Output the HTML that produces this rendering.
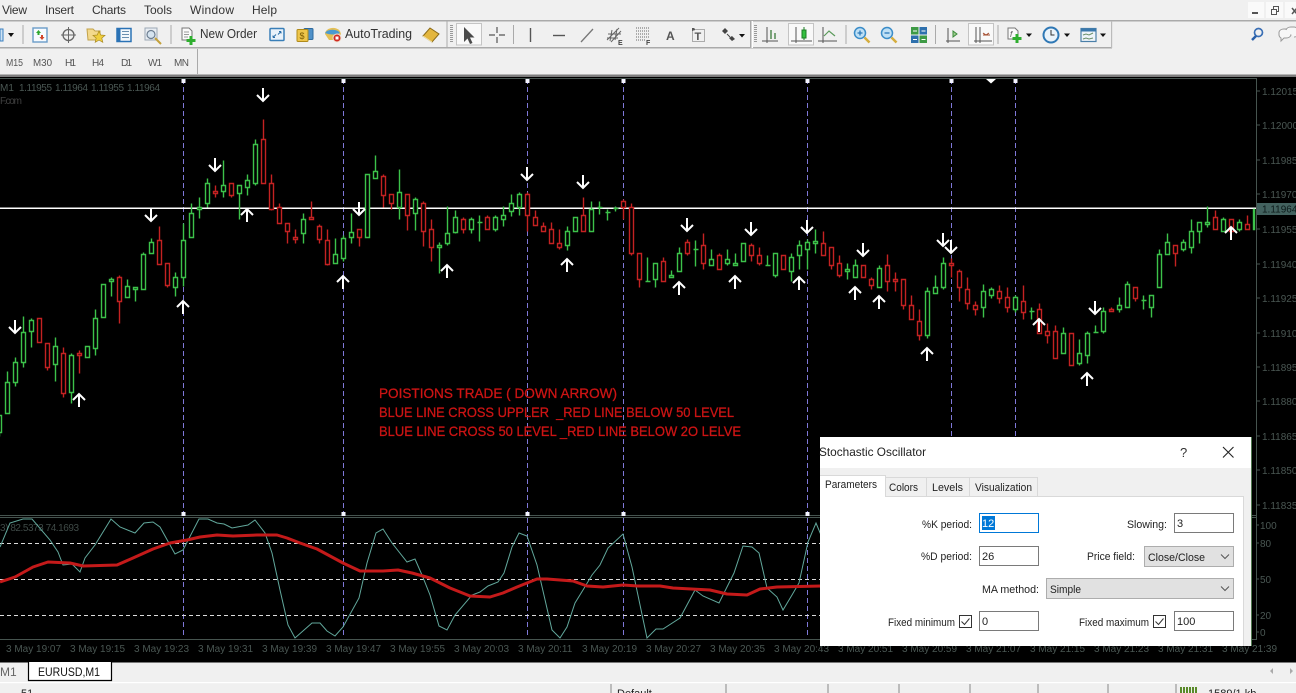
<!DOCTYPE html>
<html><head><meta charset="utf-8"><title>Chart</title>
<style>
html,body{margin:0;padding:0;width:1296px;height:693px;overflow:hidden;background:#f0f0f0}
svg{display:block;font-family:"Liberation Sans",sans-serif}
.m{font-size:12px;fill:#333}
.tf{font-size:10px;fill:#555}
.p{font-size:10px;fill:#4a5753}
.d{font-size:11.3px;fill:#222}
</style></head><body>
<svg width="1296" height="693" viewBox="0 0 1296 693" xmlns="http://www.w3.org/2000/svg">
<rect width="1296" height="693" fill="#f0f0f0"/>
<!-- menu -->
<text class="m" x="2" y="14" textLength="25">View</text>
<text class="m" x="45" y="14" textLength="29">Insert</text>
<text class="m" x="92" y="14" textLength="34">Charts</text>
<text class="m" x="144" y="14" textLength="28">Tools</text>
<text class="m" x="190" y="14" textLength="44">Window</text>
<text class="m" x="252" y="14" textLength="25">Help</text>
<!-- win controls -->
<rect x="1248" y="2" width="16" height="16" fill="#fafafa"/><rect x="1266" y="2" width="17" height="16" fill="#fafafa"/><rect x="1285" y="2" width="11" height="16" fill="#fafafa"/>
<path d="M1252 13h6" stroke="#555" stroke-width="2"/>
<path d="M1271.5 9.5h5v5h-5zM1273.5 9V6.500h5v5h-2" fill="none" stroke="#555"/>
<path d="M1292 8l5 6M1297 8l-5 6" stroke="#555" stroke-width="1.500"/>
<!-- toolbar lines -->
<rect x="0" y="20" width="1296" height="1.500" fill="#aaa"/>
<rect x="0" y="47" width="1112" height="1.500" fill="#aaa"/>
<rect x="1111" y="21" width="1.200" height="27" fill="#bbb"/>
<rect x="750" y="21" width="1.500" height="27" fill="#aaa"/><rect x="751.500" y="21" width="1.500" height="27" fill="#fff"/>
<g fill="#aaa"><rect x="22.500" y="25" width="1" height="19"/><rect x="170.500" y="25" width="1" height="19"/><rect x="446.500" y="21" width="1" height="26"/><rect x="513" y="25" width="1" height="19"/><rect x="845.500" y="25" width="1" height="19"/><rect x="935" y="25" width="1" height="19"/><rect x="997.500" y="25" width="1" height="19"/></g>
<path d="M451.500 25v18M755.500 25v18" stroke="#999" stroke-width="3" stroke-dasharray="1 1"/>
<!-- selected buttons -->
<g fill="#f9f9f9" stroke="#c4c4c4"><rect x="456.500" y="23.500" width="25" height="21.500"/><rect x="788.500" y="23.500" width="25" height="21.500"/><rect x="968.500" y="23.500" width="25" height="21.500"/></g>
<!-- left icons -->
<path d="M0 29h3v12H0z" fill="#cfe3f4" stroke="#3a7fc0"/><path d="M8 33h6l-3 4z" fill="#111"/>
<rect x="33" y="28" width="14" height="14" fill="#f7fbff" stroke="#6a9cc8" stroke-width="1.400"/><path d="M36 33l2.500-3 2.500 3h-1.500v2h-2v-2z" fill="#2fa82f"/><path d="M39.500 37l2.500 3 2.500-3H43v-2h-2v2z" fill="#d2452a"/>
<circle cx="68.500" cy="35" r="5.500" fill="none" stroke="#666" stroke-width="1.300"/><path d="M68.500 27v16M61 35h15" stroke="#666"/>
<path d="M87 29h6l2 2h5v9H88z" fill="#f3d98c" stroke="#c2a24a"/><path d="M99 31l1.800 4 4.200.4-3.200 2.700 1 4.200-3.800-2.200-3.800 2.200 1-4.200-3.200-2.700 4.200-.4z" fill="#f0cf3e" stroke="#a98a20" stroke-width=".7"/>
<rect x="117" y="28.500" width="14" height="13" fill="#f4f8fc" stroke="#2a72b5" stroke-width="1.500"/><rect x="117" y="28.500" width="3.500" height="13" fill="#2a72b5"/><path d="M122 31.500h7M122 34.500h7M122 37.500h7" stroke="#6a8fb0"/>
<rect x="145" y="28" width="12" height="12" fill="#e8edf2" stroke="#9ba8b5"/><circle cx="151" cy="34.500" r="4" fill="#d6e4f0" stroke="#6e7f92" stroke-width="1.200"/><path d="M155 38l6 6" stroke="#c4a13c" stroke-width="2"/>
<!-- New order -->
<path d="M182 28h7l3 3v9h-10z" fill="#fafafa" stroke="#777"/><path d="M184 32h5M184 34.500h5M184 37h4" stroke="#999"/><path d="M191 36v9M186.500 40.500h9" stroke="#2fae2f" stroke-width="3"/>
<text x="200" y="38" font-size="12.500" fill="#333" textLength="57" lengthAdjust="spacingAndGlyphs">New Order</text>
<rect x="270" y="28.500" width="14" height="12" rx="1" fill="#e9f2fa" stroke="#3a7fb8" stroke-width="1.500"/><path d="M273 37.500l3-3M281 31.500l-3 3M273 37.500v-2M273 37.500h2M281 31.500v2M281 31.500h-2" stroke="#2a6ea8"/>
<rect x="304" y="28.500" width="9" height="11" rx="1" fill="#4f90c8" stroke="#2e6a9e"/><rect x="297" y="29.500" width="11" height="12" rx="1" fill="#eec54a" stroke="#b08a1a"/><text x="299.500" y="39" font-size="9" fill="#7a5a00">$</text>
<path d="M325 34a8 6 0 0 1 15-3l1 3-4 6h-8z" fill="#e4bf55"/><path d="M325 33a8 5 0 0 1 15 0c-4 2-10 2-15 0z" fill="#4a9ad0"/><circle cx="337" cy="38" r="4" fill="#d02a20" stroke="#f0e0d0"/><rect x="335.500" y="36.500" width="3" height="3" fill="#fff"/>
<text x="345" y="38" font-size="12.500" fill="#333" textLength="67" lengthAdjust="spacingAndGlyphs">AutoTrading</text>
<path d="M423 36l7-8 9 6-7 8z" fill="#e3b63e" stroke="#8a6a18"/><path d="M423 36l9 6" stroke="#f8e6a8"/>
<!-- drawing tools -->
<path d="M464 27v15l3.500-3.500 2.500 5.500 2.500-1-2.500-5.500 4.500 0z" fill="#4a4a4a"/>
<path d="M497 27v6M497 37v6M489 35h6M499 35h6" stroke="#555" stroke-width="1.200"/>
<path d="M530.500 28v14" stroke="#555" stroke-width="1.400"/>
<path d="M553 35.500h12" stroke="#555" stroke-width="1.400"/>
<path d="M581 42l12-13" stroke="#777" stroke-width="1.300"/>
<path d="M607 40l12-12M611 42l10-11M608 34h13M607 38h11M612 30l-2 11M617 29l-2 11" stroke="#666" fill="none"/><text x="618" y="45" font-size="7" font-weight="bold" fill="#444">E</text>
<path d="M636 28h13M636 31h13M636 34h13M636 37h13M636 40h9" stroke="#666" stroke-dasharray="1 1"/><text x="646" y="45" font-size="7" font-weight="bold" fill="#444">F</text>
<text x="666" y="40" font-size="12" font-weight="bold" fill="#555">A</text>
<rect x="692.500" y="29.500" width="12" height="12" fill="none" stroke="#666" stroke-dasharray="1 1"/><text x="694.500" y="40" font-size="11" font-weight="bold" fill="#555">T</text><rect x="692" y="28" width="2.500" height="2.500" fill="#555"/>
<path d="M722 31l3-3 3 3-3 3zM729 38l3-2 3 3-3 2z" fill="#444"/><path d="M727 34l3 3" stroke="#444"/><path d="M739 34h6l-3 3.500z" fill="#111"/>
<!-- chart type -->
<path d="M767 27v16M762 41h16" stroke="#555"/><path d="M771 30v9M775 33v6" stroke="#3a7a3a" stroke-width="1.300"/>
<path d="M796 27v16M791 41h21" stroke="#555"/><rect x="802" y="30" width="4" height="8" fill="#34c040" stroke="#1d7d25"/><path d="M804 27v3M804 38v2" stroke="#1d7d25"/>
<path d="M823 27v16M818 41h19" stroke="#555"/><path d="M824 36l5-5 6 5" fill="none" stroke="#5a9a5a" stroke-width="1.200"/>
<!-- zoom -->
<circle cx="860" cy="33" r="5.500" fill="#bfe0f5" stroke="#3a8cc8" stroke-width="1.500"/><path d="M857.500 33h5M860 30.500v5" stroke="#2a78b8" stroke-width="1.300"/><path d="M864.500 37.500l5 5" stroke="#d5ad3d" stroke-width="2.500"/>
<circle cx="887" cy="33" r="5.500" fill="#bfe0f5" stroke="#3a8cc8" stroke-width="1.500"/><path d="M884.500 33h5" stroke="#2a78b8" stroke-width="1.300"/><path d="M891.500 37.500l5 5" stroke="#d5ad3d" stroke-width="2.500"/>
<rect x="911" y="27" width="7.500" height="7.500" fill="#3e9a45"/><rect x="919.500" y="27" width="7.500" height="7.500" fill="#2e70ad"/><rect x="911" y="35.500" width="7.500" height="7.500" fill="#2e70ad"/><rect x="919.500" y="35.500" width="7.500" height="7.500" fill="#3e9a45"/><path d="M913 31h4M921.500 31h4M913 39.500h4M921.500 39.500h4" stroke="#fff"/>
<path d="M948 28v15M946 41h14" stroke="#555"/><path d="M953 31l4 3-4 3z" fill="#9fcf8f" stroke="#3a8a3a"/>
<path d="M976 27v16M980 27v16M974 41h18" stroke="#555"/><path d="M983 33l3 2 3-2M983 35h7" stroke="#a34a2a" fill="none"/>
<!-- indicators -->
<path d="M1008 28h7l3 3v8h-10z" fill="#fafafa" stroke="#777"/><text x="1010" y="37" font-size="8" font-style="italic" fill="#555">f</text><path d="M1017 34v9M1012.500 38.500h9" stroke="#2fae2f" stroke-width="3"/><path d="M1026 33.500h6l-3 3.500z" fill="#111"/>
<circle cx="1051" cy="35" r="7.500" fill="#eaf3fa" stroke="#2f78b5" stroke-width="2"/><path d="M1051 30v5h3.500" stroke="#333" fill="none"/><path d="M1064 33.500h6l-3 3.500z" fill="#111"/>
<rect x="1081" y="28.500" width="15" height="13" fill="#eef4f9" stroke="#4a7fa8" stroke-width="1.200"/><rect x="1081" y="28.500" width="15" height="3" fill="#3a78ac"/><path d="M1083 35l3-1 3 1 4-2M1083 39l3-1 3 1 4-1" stroke="#6a8f6a" fill="none"/><path d="M1100 33.500h6l-3 3.500z" fill="#111"/>
<!-- search/chat -->
<circle cx="1258.500" cy="32.500" r="4" fill="none" stroke="#3a6fb5" stroke-width="1.700"/><path d="M1256 36l-4 4" stroke="#2a5fa8" stroke-width="2.500"/>
<path d="M1279 32a5 4 0 0 1 5-3h2a5 4 0 0 1 5 4v2a5 4 0 0 1-5 3h-2l-3 3v-3a5 4 0 0 1-2-3z" fill="#f7f7f7" stroke="#9a9a9a"/><path d="M1286 30a5 4 0 0 1 5-3h3a4 4 0 0 1 4 4v3a4 4 0 0 1-4 3" fill="#f7f7f7" stroke="#9a9a9a"/>
<!-- timeframes -->
<text class="tf" x="6" y="66" textLength="17" lengthAdjust="spacingAndGlyphs">M15</text>
<text class="tf" x="33" y="66" textLength="19" lengthAdjust="spacingAndGlyphs">M30</text>
<text class="tf" x="65" y="66" textLength="11">H1</text>
<text class="tf" x="92" y="66" textLength="12">H4</text>
<text class="tf" x="121" y="66" textLength="11">D1</text>
<text class="tf" x="148" y="66" textLength="14">W1</text>
<text class="tf" x="174" y="66" textLength="15">MN</text>
<rect x="197" y="49" width="1" height="25" fill="#aaa"/>
<rect x="0" y="74.500" width="1296" height="2.500" fill="#7d7d7d"/>
<!-- chart -->
<rect x="0" y="77" width="1296" height="584" fill="#000"/>
<path d="M0 78.500H1256.500V639.500H0M0 517.500H1256M0 515.500H1256" fill="none" stroke="#46544f"/>
<!-- labels -->
<text class="p" x="0" y="91">M1</text>
<text class="p" x="19" y="91" textLength="33">1.11955</text>
<text class="p" x="55" y="91" textLength="33">1.11964</text>
<text class="p" x="91" y="91" textLength="33">1.11955</text>
<text class="p" x="127" y="91" textLength="33">1.11964</text>
<text class="p" x="0" y="104" textLength="22" style="fill:#404040">F.com</text>
<text class="p" x="0" y="531" textLength="79" style="fill:#3f4a47">3) 82.5373 74.1693</text>
<!-- price axis -->
<g class="p">
<text class="p" x="1262" y="95">1.12015</text><text class="p" x="1262" y="129">1.12000</text><text class="p" x="1262" y="164">1.11985</text><text class="p" x="1262" y="198">1.11970</text><text class="p" x="1262" y="233">1.11955</text><text class="p" x="1262" y="268">1.11940</text><text class="p" x="1262" y="302">1.11925</text><text class="p" x="1262" y="337">1.11910</text><text class="p" x="1262" y="371">1.11895</text><text class="p" x="1262" y="405">1.11880</text><text class="p" x="1262" y="440">1.11865</text><text class="p" x="1262" y="474">1.11850</text><text class="p" x="1262" y="509">1.11835</text>
<text class="p" x="1260" y="529">100</text><text class="p" x="1260" y="547">80</text><text class="p" x="1260" y="583">50</text><text class="p" x="1260" y="619">20</text><text class="p" x="1260" y="636">0</text>
</g>
<path d="M1257 91h3M1257 125h3M1257 160h3M1257 194h3M1257 229h3M1257 264h3M1257 298h3M1257 333h3M1257 367h3M1257 401h3M1257 436h3M1257 470h3M1257 505h3M1257 525h2M1257 543h2M1257 579h2M1257 615h2M1257 632h2" stroke="#46544f"/>
<rect x="1257" y="203" width="39" height="12" fill="#43625f"/><text x="1262" y="212.500" font-size="10" fill="#0c1a1a">1.11964</text>
<!-- time axis -->
<g>
<text class="p" x="6" y="652">3 May 19:07</text><text class="p" x="70" y="652">3 May 19:15</text><text class="p" x="134" y="652">3 May 19:23</text><text class="p" x="198" y="652">3 May 19:31</text><text class="p" x="262" y="652">3 May 19:39</text><text class="p" x="326" y="652">3 May 19:47</text><text class="p" x="390" y="652">3 May 19:55</text><text class="p" x="454" y="652">3 May 20:03</text><text class="p" x="518" y="652">3 May 20:11</text><text class="p" x="582" y="652">3 May 20:19</text><text class="p" x="646" y="652">3 May 20:27</text><text class="p" x="710" y="652">3 May 20:35</text><text class="p" x="774" y="652">3 May 20:43</text><text class="p" x="838" y="652">3 May 20:51</text><text class="p" x="902" y="652">3 May 20:59</text><text class="p" x="966" y="652">3 May 21:07</text><text class="p" x="1030" y="652">3 May 21:15</text><text class="p" x="1094" y="652">3 May 21:23</text><text class="p" x="1158" y="652">3 May 21:31</text><text class="p" x="1222" y="652">3 May 21:39</text>
</g>
<!-- vertical lines -->
<path d="M183.500 79V514M343.500 79V514M527.500 79V514M623.500 79V514M807.500 79V514M951.500 79V514M1015.500 79V514M183.500 518V636M343.500 518V636M527.500 518V636M623.500 518V636M807.500 518V636" stroke="#7f78d8" stroke-dasharray="5 3" fill="none"/>
<g fill="#f4f4ff"><rect x="181.500" y="79" width="4" height="4"/><rect x="341.500" y="79" width="4" height="4"/><rect x="525.500" y="79" width="4" height="4"/><rect x="621.500" y="79" width="4" height="4"/><rect x="805.500" y="79" width="4" height="4"/><rect x="949.500" y="79" width="4" height="4"/><rect x="1013.500" y="79" width="4" height="4"/>
<rect x="181.500" y="512" width="4" height="4"/><rect x="341.500" y="512" width="4" height="4"/><rect x="525.500" y="512" width="4" height="4"/><rect x="621.500" y="512" width="4" height="4"/><rect x="805.500" y="512" width="4" height="4"/></g>
<path d="M986 79h10l-5 4.500z" fill="#fff"/>
<!-- price line -->
<rect x="0" y="207.500" width="1256" height="1.500" fill="#fff"/>
<!-- green candles -->
<g transform="translate(.5,.5)" fill="#000" stroke-width="1.400">
<path stroke="#3cc24a" d="M-1 415V415m-2 0h4v17h-4zm2 17V436M7 371V382m-2 0h4v31h-4zm2 31V413M15 357V362m-2 0h4v20h-4zm2 20V386M23 316V332m-2 0h4v30h-4zm2 30V367M31 318V320m-2 0h4v11h-4zm2 11V347M55 337V346m-2 0h4v18h-4zm2 18V381M71 353V355m-2 0h4v37h-4zm2 37V403M87 346V346m-2 0h4v11h-4zm2 11V357M95 309V318m-2 0h4v30h-4zm2 30V355M103 284V284m-2 0h4v33h-4zm2 33V317M111 277V279m-2 0h4v2h-4zm2 2V296M127 279V286m-2 0h4v11h-4zm2 11V297M135 287V287m-2 0h4v2h-4zm2 2V301M143 252V254m-2 0h4v35h-4zm2 35V289M151 238V242m-2 0h4v11h-4zm2 11V253M175 272V277m-2 0h4v10h-4zm2 10V296M183 223V240m-2 0h4v37h-4zm2 37V286M191 203V213m-2 0h4v24h-4zm2 24V237M199 197V207m-2 0h4v2h-4zm2 2V218M207 178V183m-2 0h4v20h-4zm2 20V207M223 160V185m-2 0h4v6h-4zm2 6V197M239 185V185m-2 0h4v8h-4zm2 8V219M247 174V180m-2 0h4v7h-4zm2 7V195M255 139V144m-2 0h4v39h-4zm2 39V185M303 213V219m-2 0h4v14h-4zm2 14V243M335 238V254m-2 0h4v9h-4zm2 9V263M343 235V238m-2 0h4v20h-4zm2 20V261M351 213V232m-2 0h4v5h-4zm2 5V243M367 174V174m-2 0h4v63h-4zm2 63V237M375 155V171m-2 0h4v7h-4zm2 7V178M399 169V192m-2 0h4v15h-4zm2 15V219M415 197V199m-2 0h4v14h-4zm2 14V230
M439 242V245m-2 0h4v2h-4zm2 2V273M447 206V233m-2 0h4v10h-4zm2 10V245M455 210V217m-2 0h4v15h-4zm2 15V233M471 217V219m-2 0h4v10h-4zm2 10V233M479 215V241M495 215V217m-2 0h4v12h-4zm2 12V231M503 206V215m-2 0h4v4h-4zm2 4V226M511 194V203m-2 0h4v8h-4zm2 8V216M519 192V194m-2 0h4v13h-4zm2 13V215M567 226V231m-2 0h4v14h-4zm2 14V250M575 217V217m-2 0h4v14h-4zm2 14V231M591 201V209m-2 0h4v22h-4zm2 22V231M599 201V214M607 209V220M615 206V211M647 257V281M655 263V263m-2 0h4v16h-4zm2 16V287M671 270V275m-2 0h4v2h-4zm2 2V277M679 247V253m-2 0h4v18h-4zm2 18V271M695 240V266M711 249V259m-2 0h4v6h-4zm2 6V265M727 249V259m-2 0h4v4h-4zm2 4V265M735 253V263m-2 0h4v2h-4zm2 2V265M743 243V243m-2 0h4v18h-4zm2 18V261M767 255V265M775 253V253m-2 0h4v22h-4zm2 22V277M791 253V257m-2 0h4v14h-4zm2 14V281M799 240V245m-2 0h4v10h-4zm2 10V269M807 239V242m-2 0h4v7h-4zm2 7V269M815 229V241m-2 0h4v2h-4zm2 2V253M847 263V269m-2 0h4v2h-4zm2 2V279M855 259V265m-2 0h4v12h-4zm2 12V277
M879 265V268m-2 0h4v19h-4zm2 19V287M927 287V291m-2 0h4v44h-4zm2 44V338M935 275V287m-2 0h4v6h-4zm2 6V293M943 257V263m-2 0h4v24h-4zm2 24V289M983 284V291m-2 0h4v16h-4zm2 16V317M991 287V289m-2 0h4v6h-4zm2 6V298M1015 295V297m-2 0h4v12h-4zm2 12V312M1031 307V319M1063 327V333m-2 0h4v20h-4zm2 20V353M1079 339V353m-2 0h4v10h-4zm2 10V365M1087 331V333m-2 0h4v22h-4zm2 22V363M1095 325V332M1103 307V311m-2 0h4v20h-4zm2 20V333M1119 297V305m-2 0h4v4h-4zm2 4V312M1127 281V284m-2 0h4v23h-4zm2 23V307M1143 295V309M1151 295V295m-2 0h4v12h-4zm2 12V317M1159 249V254m-2 0h4v33h-4zm2 33V287M1167 233V242m-2 0h4v12h-4zm2 12V254M1183 239V242m-2 0h4v7h-4zm2 7V251M1191 219V231m-2 0h4v16h-4zm2 16V253M1199 222V222m-2 0h4v9h-4zm2 9V243M1207 206V222m-2 0h4v2h-4zm2 2V227M1223 217V219m-2 0h4v12h-4zm2 12V231M1239 219V222m-2 0h4v7h-4zm2 7V231M1255 209V209m-2 0h1v20h-1z"/>
<path stroke="#3cc24a" d="M477 222h5M597 207h5M605 212h5M613 208h5M645 281h5M693 249h5M765 265h5M1029 311h5M1093 332h5M1141 300h5"/>
<!-- red candles -->
<path stroke="#c42222" d="M39 318V318m-2 0h4v24h-4zm2 24V342M47 343V343m-2 0h4v24h-4zm2 24V370M63 347V353m-2 0h4v40h-4zm2 40V397M79 350V353m-2 0h4v2h-4zm2 2V373M119 275V277m-2 0h4v24h-4zm2 24V323M159 226V240m-2 0h4v24h-4zm2 24V264M167 263V263m-2 0h4v22h-4zm2 22V287M215 185V191m-2 0h4v2h-4zm2 2V197M231 183V183m-2 0h4v12h-4zm2 12V197M263 119V139m-2 0h4v44h-4zm2 44V183M271 174V183m-2 0h4v26h-4zm2 26V210M279 203V207m-2 0h4v16h-4zm2 16V223M287 223V223m-2 0h4v8h-4zm2 8V243M295 229V237m-2 0h4v2h-4zm2 2V243M311 201V217m-2 0h4v2h-4zm2 2V219M319 224V226m-2 0h4v13h-4zm2 13V243M327 229V240m-2 0h4v24h-4zm2 24V265M359 229V229m-2 0h4v8h-4zm2 8V246M383 174V176m-2 0h4v19h-4zm2 19V207M391 194V194m-2 0h4v9h-4zm2 9V209M407 194V194m-2 0h4v21h-4zm2 21V230M423 201V203m-2 0h4v28h-4zm2 28V246M431 219V229m-2 0h4v18h-4zm2 18V261M463 217V219m-2 0h4v10h-4zm2 10V233M487 215V217m-2 0h4v12h-4zm2 12V229M527 192V194m-2 0h4v21h-4zm2 21V231M535 210V217m-2 0h4v8h-4zm2 8V225M543 222V226m-2 0h4v5h-4zm2 5V231M551 222V229m-2 0h4v14h-4zm2 14V243M559 229V243m-2 0h4v4h-4zm2 4V249M583 197V215m-2 0h4v16h-4zm2 16V231M623 199V201m-2 0h4v6h-4zm2 6V219M631 203V207m-2 0h4v46h-4zm2 46V255M639 253V253m-2 0h4v26h-4zm2 26V287M663 257V261m-2 0h4v20h-4zm2 20V281M687 239V242m-2 0h4v11h-4zm2 11V255M703 233V245m-2 0h4v18h-4zm2 18V269M719 253V255m-2 0h4v14h-4zm2 14V269M751 243V245m-2 0h4v10h-4zm2 10V261M759 247V255m-2 0h4v8h-4zm2 8V265M783 255V255m-2 0h4v14h-4zm2 14V269M823 231V243m-2 0h4v12h-4zm2 12V255M831 247V247m-2 0h4v18h-4zm2 18V269M839 255V263m-2 0h4v12h-4zm2 12V277M863 265V265m-2 0h4v12h-4zm2 12V277M871 277V279m-2 0h4v6h-4zm2 6V289M887 254V265m-2 0h4v16h-4zm2 16V291M895 272V279m-2 0h4v2h-4zm2 2V291M903 279V279m-2 0h4v26h-4zm2 26V309M911 295V305m-2 0h4v14h-4zm2 14V319M919 309V321m-2 0h4v14h-4zm2 14V340M951 258V263m-2 0h4v2h-4zm2 2V277M959 269V271m-2 0h4v16h-4zm2 16V301M967 277V289m-2 0h4v14h-4zm2 14V309M975 301V305m-2 0h4v4h-4zm2 4V315M999 285V291m-2 0h4v7h-4zm2 7V303M1007 287V297m-2 0h4v10h-4zm2 10V312M1023 285V301m-2 0h4v11h-4zm2 11V319M1039 303V309m-2 0h4v24h-4zm2 24V333M1047 323V331m-2 0h4v4h-4zm2 4V343M1055 325V331m-2 0h4v27h-4zm2 27V358M1071 333V333m-2 0h4v32h-4zm2 32V365M1111 307V309m-2 0h4v2h-4zm2 2V311M1135 287V287m-2 0h4v11h-4zm2 11V301M1175 245V245m-2 0h4v8h-4zm2 8V266M1215 210V217m-2 0h4v12h-4zm2 12V229M1231 219V219m-2 0h4v12h-4zm2 12V231M1247 215V224m-2 0h4v5h-4zm2 5V229"/>
</g>
<!-- arrows -->
<g fill="none" stroke="#fff" stroke-width="2">
<path d="M15 320v13M9 327l6 6 6-6M151 208v13M145 215l6 6 6-6M215 158v13M209 165l6 6 6-6M263 88v13M257 95l6 6 6-6M359 202v13M353 209l6 6 6-6M527 167v13M521 174l6 6 6-6M583 175v13M577 182l6 6 6-6M687 218v13M681 225l6 6 6-6M751 222v13M745 229l6 6 6-6M807 220v13M801 227l6 6 6-6M863 243v13M857 250l6 6 6-6M943 233v13M937 240l6 6 6-6M951 240v13M945 247l6 6 6-6M1095 301v13M1089 308l6 6 6-6"/>
<path d="M247 209v13M241 215l6-6 6 6M343 276v13M337 282l6-6 6 6M183 301v13M177 307l6-6 6 6M79 394v13M73 400l6-6 6 6M447 265v13M441 271l6-6 6 6M567 259v13M561 265l6-6 6 6M679 282v13M673 288l6-6 6 6M735 276v13M729 282l6-6 6 6M799 277v13M793 283l6-6 6 6M855 287v13M849 293l6-6 6 6M879 296v13M873 302l6-6 6 6M927 348v13M921 354l6-6 6 6M1039 319v13M1033 325l6-6 6 6M1087 373v13M1081 379l6-6 6 6M1231 227v13M1225 233l6-6 6 6"/>
</g>
<!-- red text -->
<g font-size="14" fill="#cc1414" stroke="#cc1414" stroke-width=".3">
<text x="379" y="398" textLength="238" lengthAdjust="spacingAndGlyphs">POISTIONS TRADE ( DOWN ARROW)</text>
<text x="379" y="417" textLength="355" lengthAdjust="spacingAndGlyphs" xml:space="preserve">BLUE LINE CROSS UPPLER  _RED LINE BELOW 50 LEVEL</text>
<text x="379" y="436" textLength="362" lengthAdjust="spacingAndGlyphs">BLUE LINE CROSS 50 LEVEL _RED LINE BELOW 2O LELVE</text>
</g>
<!-- stochastic -->
<path d="M0 543.500H820M0 579.500H820M0 615.500H820" stroke="#dcdcdc" stroke-dasharray="4 3"/>
<path fill="none" stroke="#62a89c" stroke-width="1" d="M0 547L10 523 23 519 32 519 50 540 58 552 63 565 72 564 80 572 85 558 95 545 111 519 120 527 135 533 144 523 153 522 160 527 175 554 183 550 199 519 208 519 217 523 224 524 232 528 248 525 255 520 265 533 272 553 280 590 288 625 295 638 312 623 320 623 327 631 335 636 343 627 359 598 367 563 376 533 383 529 392 543 407 562 415 559 422 575 430 595 439 626 447 630 455 615 472 595 480 592 488 586 498 582 504 573 512 547 519 533 527 536 537 565 552 630 560 638 567 627 575 603 583 590 592 575 600 565 608 548 623 534 632 567 647 638 656 629 663 629 680 618 695 590 703 596 719 603 734 573 743 546 752 547 759 553 767 588 777 597 783 610 792 595 799 583 808 542 816 523 821 535"/>
<path fill="none" stroke="#c41a1a" stroke-width="3" stroke-linejoin="round" d="M0 582L15 577 33 567 48 562 70 563 83 566 117 565 133 558 153 549 170 543 187 540 200 537 217 535 233 536 257 535 277 535 287 538 300 543 317 549 343 563 360 571 383 571 398 570 412 573 430 578 450 588 470 596 490 597 503 593 517 587 537 579 547 579 573 581 587 586 603 587 623 585 637 586 660 586 673 588 710 590 727 594 747 595 760 589 777 587 821 586"/>
<!-- bottom bars -->
<rect x="0" y="661" width="1296" height="32" fill="#f0f0f0"/>
<rect x="0" y="661" width="1296" height="1.500" fill="#000"/>
<rect x="0" y="682" width="1296" height="1.200" fill="#fff"/>
<text x="0" y="676" font-size="12" fill="#666">M1</text>
<path d="M28.500 662v18.500h83v-18.500" fill="#fff" stroke="#000" stroke-width="1.200"/>
<text x="38" y="676" font-size="12" fill="#111" textLength="62" lengthAdjust="spacingAndGlyphs">EURUSD,M1</text>
<path d="M1270 671l3-3v6zM1290 668l3 3-3 3z" fill="#aaa"/>
<text x="21" y="697" font-size="11" fill="#222">51</text>
<text x="617" y="697" font-size="11" fill="#222">Default</text>
<path d="M611 684v9M726 684v9M828 684v9M899 684v9M970 684v9M1038 684v9M1108 684v9M1176 684v9" stroke="#888"/>
<path d="M1181 693v-6M1184 693v-6M1187 693v-6M1190 693v-6M1193 693v-6M1196 693v-6" stroke="#5a8a2a" stroke-width="2"/>
<text x="1208" y="697" font-size="11" fill="#222">1589/1 kb</text>
<!-- dialog -->
<rect x="820" y="437" width="431" height="209" fill="#f0f0f0"/>
<rect x="820" y="437" width="431" height="31" fill="#fff"/>
<path d="M1251.500 437v209" stroke="#4f7a4f"/>
<text x="819" y="456" font-size="12" fill="#222" textLength="107" lengthAdjust="spacingAndGlyphs">Stochastic Oscillator</text>
<text x="1180" y="457" font-size="13" fill="#333">?</text>
<path d="M1223 447l10.500 10.500M1233.500 447L1223 457.500" stroke="#222" stroke-width="1.100"/>
<rect x="820" y="496" width="423" height="150" fill="#fff"/>
<path d="M1243.500 496v150M885 496.500h358" stroke="#d9d9d9" fill="none"/>
<rect x="820" y="475" width="65" height="22" fill="#fff"/><path d="M885.500 475v21M820 475.500h65" stroke="#d9d9d9"/>
<path d="M885.500 477.500H1037.500V496M926.500 477.500V496M969.500 477.500V496" fill="none" stroke="#d9d9d9"/>
<text x="825" y="488" font-size="11" fill="#222" textLength="52" lengthAdjust="spacingAndGlyphs">Parameters</text>
<text x="889" y="491" font-size="11" fill="#222" textLength="29" lengthAdjust="spacingAndGlyphs">Colors</text>
<text x="932" y="491" font-size="11" fill="#222" textLength="31" lengthAdjust="spacingAndGlyphs">Levels</text>
<text x="975" y="491" font-size="11" fill="#222" textLength="57" lengthAdjust="spacingAndGlyphs">Visualization</text>
<g fill="#fff" stroke="#7a7a7a"><rect x="979.500" y="546.500" width="59" height="19"/><rect x="1174.500" y="513.500" width="59" height="19"/><rect x="979.500" y="611.500" width="59" height="19"/><rect x="1174.500" y="611.500" width="59" height="19"/></g>
<rect x="979.500" y="513.500" width="59" height="19" fill="#fff" stroke="#0078d7"/>
<rect x="982" y="516" width="13" height="14" fill="#0078d7"/>
<text x="982" y="527" font-size="11" fill="#fff">12</text>
<text x="1177" y="527" font-size="11" fill="#222">3</text>
<text x="982" y="560" font-size="11" fill="#222">26</text>
<text x="982" y="625" font-size="11" fill="#222">0</text>
<text x="1177" y="625" font-size="11" fill="#222">100</text>
<text class="d" x="922" y="528" textLength="50" lengthAdjust="spacingAndGlyphs">%K period:</text>
<text class="d" x="1127" y="528" textLength="40" lengthAdjust="spacingAndGlyphs">Slowing:</text>
<text class="d" x="921" y="560" textLength="51" lengthAdjust="spacingAndGlyphs">%D period:</text>
<text class="d" x="1087" y="560" textLength="48" lengthAdjust="spacingAndGlyphs">Price field:</text>
<text class="d" x="982" y="593" textLength="57" lengthAdjust="spacingAndGlyphs">MA method:</text>
<text class="d" x="888" y="626" textLength="67" lengthAdjust="spacingAndGlyphs">Fixed minimum</text>
<text class="d" x="1079" y="626" textLength="70" lengthAdjust="spacingAndGlyphs">Fixed maximum</text>
<g fill="#e1e1e1" stroke="#adadad"><rect x="1144.500" y="546.500" width="89" height="20"/><rect x="1046.500" y="578.500" width="187" height="20"/></g>
<text x="1148" y="561" font-size="11.300" fill="#222" textLength="57" lengthAdjust="spacingAndGlyphs">Close/Close</text>
<text x="1050" y="593" font-size="11.300" fill="#222" textLength="31" lengthAdjust="spacingAndGlyphs">Simple</text>
<path d="M1221 554.500l4 4 4-4M1221 586.500l4 4 4-4" fill="none" stroke="#555"/>
<rect x="959.500" y="615.500" width="12" height="12" fill="#fff" stroke="#333"/><rect x="1153.500" y="615.500" width="12" height="12" fill="#fff" stroke="#333"/>
<path d="M961.500 621.500l3 3 5-6M1155.500 621.500l3 3 5-6" fill="none" stroke="#333"/>
</svg>
</body></html>
